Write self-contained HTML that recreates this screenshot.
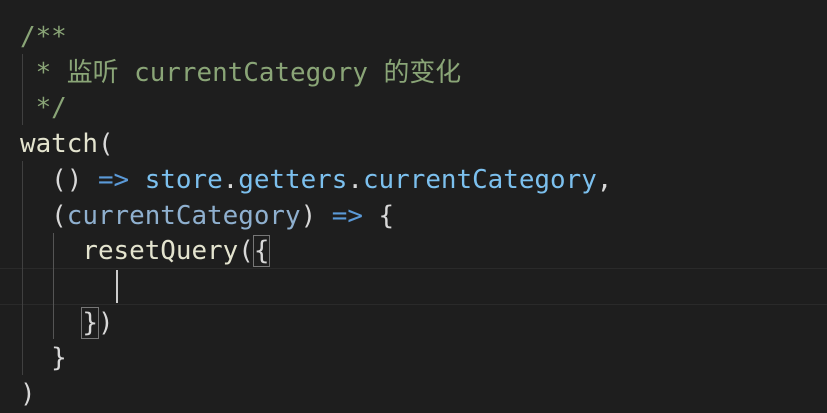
<!DOCTYPE html><html><head><style>
body{margin:0;width:827px;height:409px;background:#1e1e1e;overflow:hidden;position:relative}
.c{position:absolute;left:20px;top:20px;font-family:"DejaVu Sans Mono","Noto Sans CJK SC",monospace;font-size:25.9px;line-height:35.7px;color:#d8d8d8;white-space:pre}
.cm{color:#8aa577}.b{color:#5b9ad8}.l{color:#7cc0ee}.f{color:#e4e4cf}.p{color:#8fb0cf}
.g{position:absolute;width:1px;background:#404040}
.hl{position:absolute;left:0;width:827px;top:268px;height:35px;border-top:1px solid #2a2a2a;border-bottom:1px solid #2a2a2a}
.br{outline:1px solid #777}
</style></head><body>
<div class="hl"></div>
<div class="g" style="left:22px;top:54px;height:71px"></div>
<div class="g" style="left:22px;top:161px;height:214px"></div>
<div class="g" style="left:53px;top:233px;height:106px;background:#555"></div>
<div style="position:absolute;left:116px;top:270px;width:2px;height:33px;background:#ccc"></div>
<div class="c"><span class="cm">/**
 * 监听 currentCategory 的变化
 */</span>
<span class="f">watch</span>(
  () <span class="b">=&gt;</span> <span class="l">store</span>.<span class="l">getters</span>.<span class="l">currentCategory</span>,
  (<span class="p">currentCategory</span>) <span class="b">=&gt;</span> {
    <span class="f">resetQuery</span>(<span class="br">{</span>

    <span class="br">}</span>)
  }
)</div>
</body></html>
